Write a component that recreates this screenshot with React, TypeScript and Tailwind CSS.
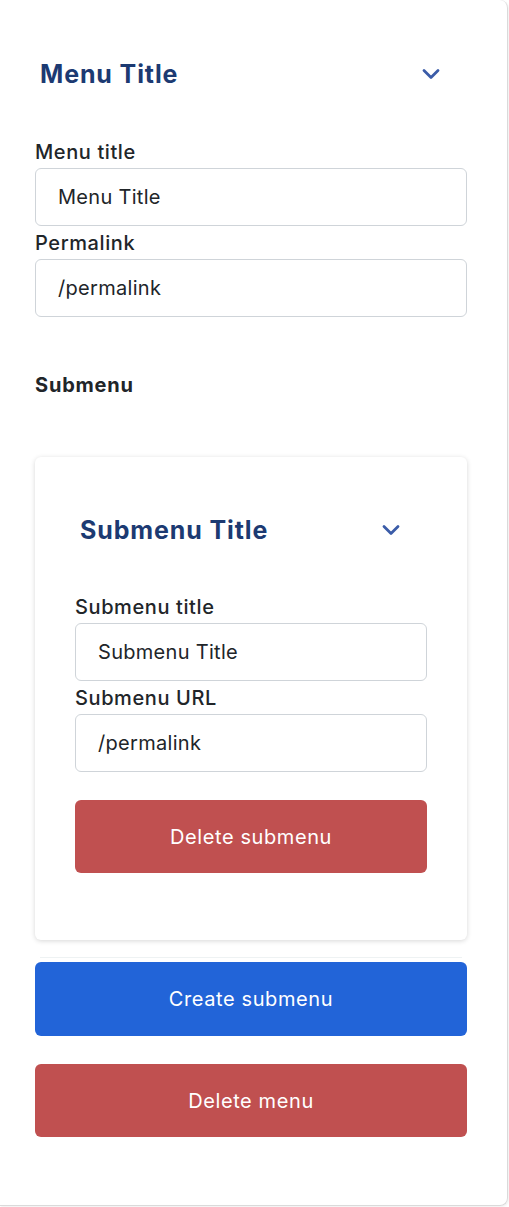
import React from "react";

function Chevron() {
  return (
    <svg width="20" height="14" viewBox="0 0 20 14" fill="none">
      <path d="M3 3.5 L10 10.5 L17 3.5" stroke="#3b5ca8" strokeWidth="2.8" strokeLinecap="round" strokeLinejoin="round" />
    </svg>
  );
}

function Field({ label, value }: { label: string; value: string }) {
  return (
    <div className="flex flex-col">
      <label className="text-[20px] leading-[27px] font-medium tracking-[0.03em] text-[#212529] mb-[2px]">{label}</label>
      <div className="h-[58px] border border-[#cfd4d9] rounded-[6px] flex items-center pl-[22px] text-[20px] tracking-[0.015em] text-[#212529] bg-white">
        {value}
      </div>
    </div>
  );
}

export default function App() {
  return (
    <div className="min-h-[1207px] bg-white" style={{ fontFamily: "Inter, 'Noto Sans', sans-serif" }}>
      <div className="w-[508px] h-[1206px] border-r border-b border-[#dadada] rounded-br-[8px] rounded-tr-[8px] pl-[35px] pr-[40px] pt-[56px] shadow-[1px_1px_2px_rgba(0,0,0,0.06)]">
        <div className="flex items-center justify-between pl-[5px] pr-[26px] h-[36px]">
          <span className="text-[25px] font-bold tracking-[0.035em] text-[#1c3a72] leading-[36px]">Menu Title</span>
          <Chevron />
        </div>
        <div className="mt-[47px] flex flex-col gap-[4px]">
          <Field label="Menu title" value="Menu Title" />
          <Field label="Permalink" value="/permalink" />
        </div>
        <div className="mt-[55px] text-[20px] leading-[27px] font-bold tracking-[0.04em] text-[#212529]">Submenu</div>
        <div className="mt-[58px] h-[483px] rounded-[6px] bg-white shadow-[0_1px_5px_rgba(0,0,0,0.16)] px-[40px] pt-[55px]">
          <div className="flex items-center justify-between pl-[5px] pr-[26px] h-[36px]">
            <span className="text-[25px] font-bold tracking-[0.035em] text-[#1c3a72] leading-[36px]">Submenu Title</span>
            <Chevron />
          </div>
          <div className="mt-[46px] flex flex-col gap-[4px]">
            <Field label="Submenu title" value="Submenu Title" />
            <Field label="Submenu URL" value="/permalink" />
          </div>
          <button className="mt-[28px] w-full h-[73px] rounded-[6px] bg-[#c05050] text-white text-[20px] tracking-[0.03em]">
            Delete submenu
          </button>
        </div>
        <div className="mt-[17px] mx-[5px] h-px bg-[#eef2f3]" />
        <button className="mt-[4px] w-full h-[74px] rounded-[6px] bg-[#2264d8] text-white text-[20px] tracking-[0.03em]">
          Create submenu
        </button>
        <button className="mt-[28px] w-full h-[73px] rounded-[6px] bg-[#c05050] text-white text-[20px] tracking-[0.03em]">
          Delete menu
        </button>
      </div>
    </div>
  );
}
